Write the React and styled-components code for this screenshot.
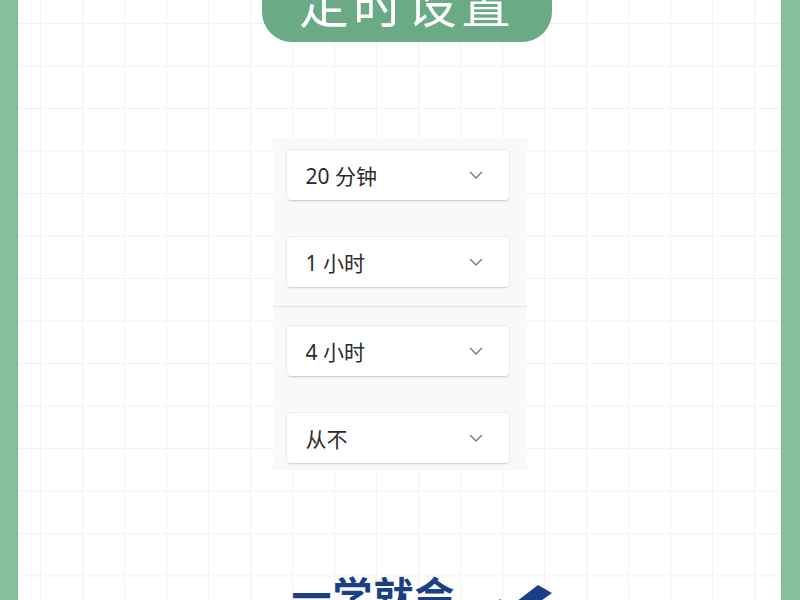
import React from 'react';
import styled, { createGlobalStyle } from 'styled-components';

const GlobalStyle = createGlobalStyle`
  html, body {
    margin: 0;
    padding: 0;
    background: #87c19c;
  }
  body {
    font-family: "Noto Sans", "Noto Sans CJK SC", sans-serif;
  }
`;

const options = ['20 分钟', '1 小时', '4 小时', '从不'];

const ChevronDown = () => (
  <svg width="14" height="9" viewBox="0 0 14 9" fill="none">
    <path d="M1.5 1.5 L7 7 L12.5 1.5" stroke="#7a7a7a" strokeWidth="1.4" strokeLinecap="round" strokeLinejoin="round" />
  </svg>
);

const Select = ({ label }) => (
  <Dropdown>
    <Label>{label}</Label>
    <ChevronDown />
  </Dropdown>
);

const App = () => (
  <>
    <GlobalStyle />
    <Frame>
      <Border />
      <Sheet>
        <TitlePill>定时设置</TitlePill>
        <Card>
          <Section top="11px" bottom="18px">
            <Select label={options[0]} />
            <Select label={options[1]} />
          </Section>
          <Section top="18px" bottom="6px">
            <Select label={options[2]} />
            <Select label={options[3]} />
          </Section>
        </Card>
        <Footer>
          <Slogan>一学就会</Slogan>
          <Tick width="66" height="40" viewBox="0 0 66 40">
            <path d="M0 22 L10 14 L18 23 L48 0 L62 8 L20 38 Z" fill="#1b3f86" />
          </Tick>
        </Footer>
      </Sheet>
      <Border wide />
    </Frame>
  </>
);

export default App;

const Frame = styled.div`
  width: 800px;
  height: 600px;
  display: flex;
  overflow: hidden;
`;
const Border = styled.div`
  flex: 0 0 ${(p) => (p.wide ? '19px' : '18px')};
  background: #87c19c;
  box-shadow: inset ${(p) => (p.wide ? '1px' : '-1px')} 0 0 #7db593;
`;
const Sheet = styled.div`
  flex: 1;
  display: flex;
  flex-direction: column;
  align-items: center;
  background-color: #fff;
  background-image:
    linear-gradient(to right, #f2f2f2 1px, transparent 1px),
    linear-gradient(to bottom, #f2f2f2 1px, transparent 1px);
  background-size: 42px 42.5px;
  background-position: 22px 23px;

  & > * {
    flex-shrink: 0;
  }
`;
const TitlePill = styled.div`
  margin-top: -30px;
  margin-left: 15px;
  width: 290px;
  height: 72px;
  border-radius: 30px;
  background: #6aaa85;
  color: #fff;
  display: flex;
  align-items: center;
  justify-content: center;
  font-family: "Noto Sans CJK SC", sans-serif;
  font-size: 50px;
  letter-spacing: 4px;
  line-height: 1;
  padding-bottom: 10px;
  box-sizing: border-box;
`;
const Card = styled.div`
  margin-top: 96px;
  width: 254px;
  background: #f9f9f9;
  display: flex;
  flex-direction: column;
`;
const Section = styled.div`
  display: flex;
  flex-direction: column;
  gap: 35px;
  padding: ${(p) => p.top} 17px ${(p) => p.bottom} 13px;
  & + & {
    border-top: 1.5px solid #e4e4e4;
  }
`;
const Dropdown = styled.div`
  height: 52px;
  box-sizing: border-box;
  background: #fff;
  border: 1px solid #ececec;
  border-bottom-color: #d3d3d3;
  border-radius: 5px;
  box-shadow: 0 1px 2px rgba(0, 0, 0, 0.06);
  display: flex;
  align-items: center;
  justify-content: space-between;
  padding: 0 26px 0 19px;
`;
const Label = styled.span`
  font-family: "Noto Sans", "Noto Sans CJK SC", sans-serif;
  font-size: 21px;
  color: #2c2c2c;
`;
const Footer = styled.div`
  margin-top: 104px;
  margin-left: 48px;
  display: flex;
  align-items: flex-start;
  gap: 34px;
`;
const Slogan = styled.div`
  font-family: "Noto Sans CJK SC", sans-serif;
  font-weight: 700;
  font-size: 40px;
  line-height: 1;
  color: #1b3f86;
  letter-spacing: 1px;
`;
const Tick = styled.svg`
  margin-top: 11px;
  flex: none;
`;
